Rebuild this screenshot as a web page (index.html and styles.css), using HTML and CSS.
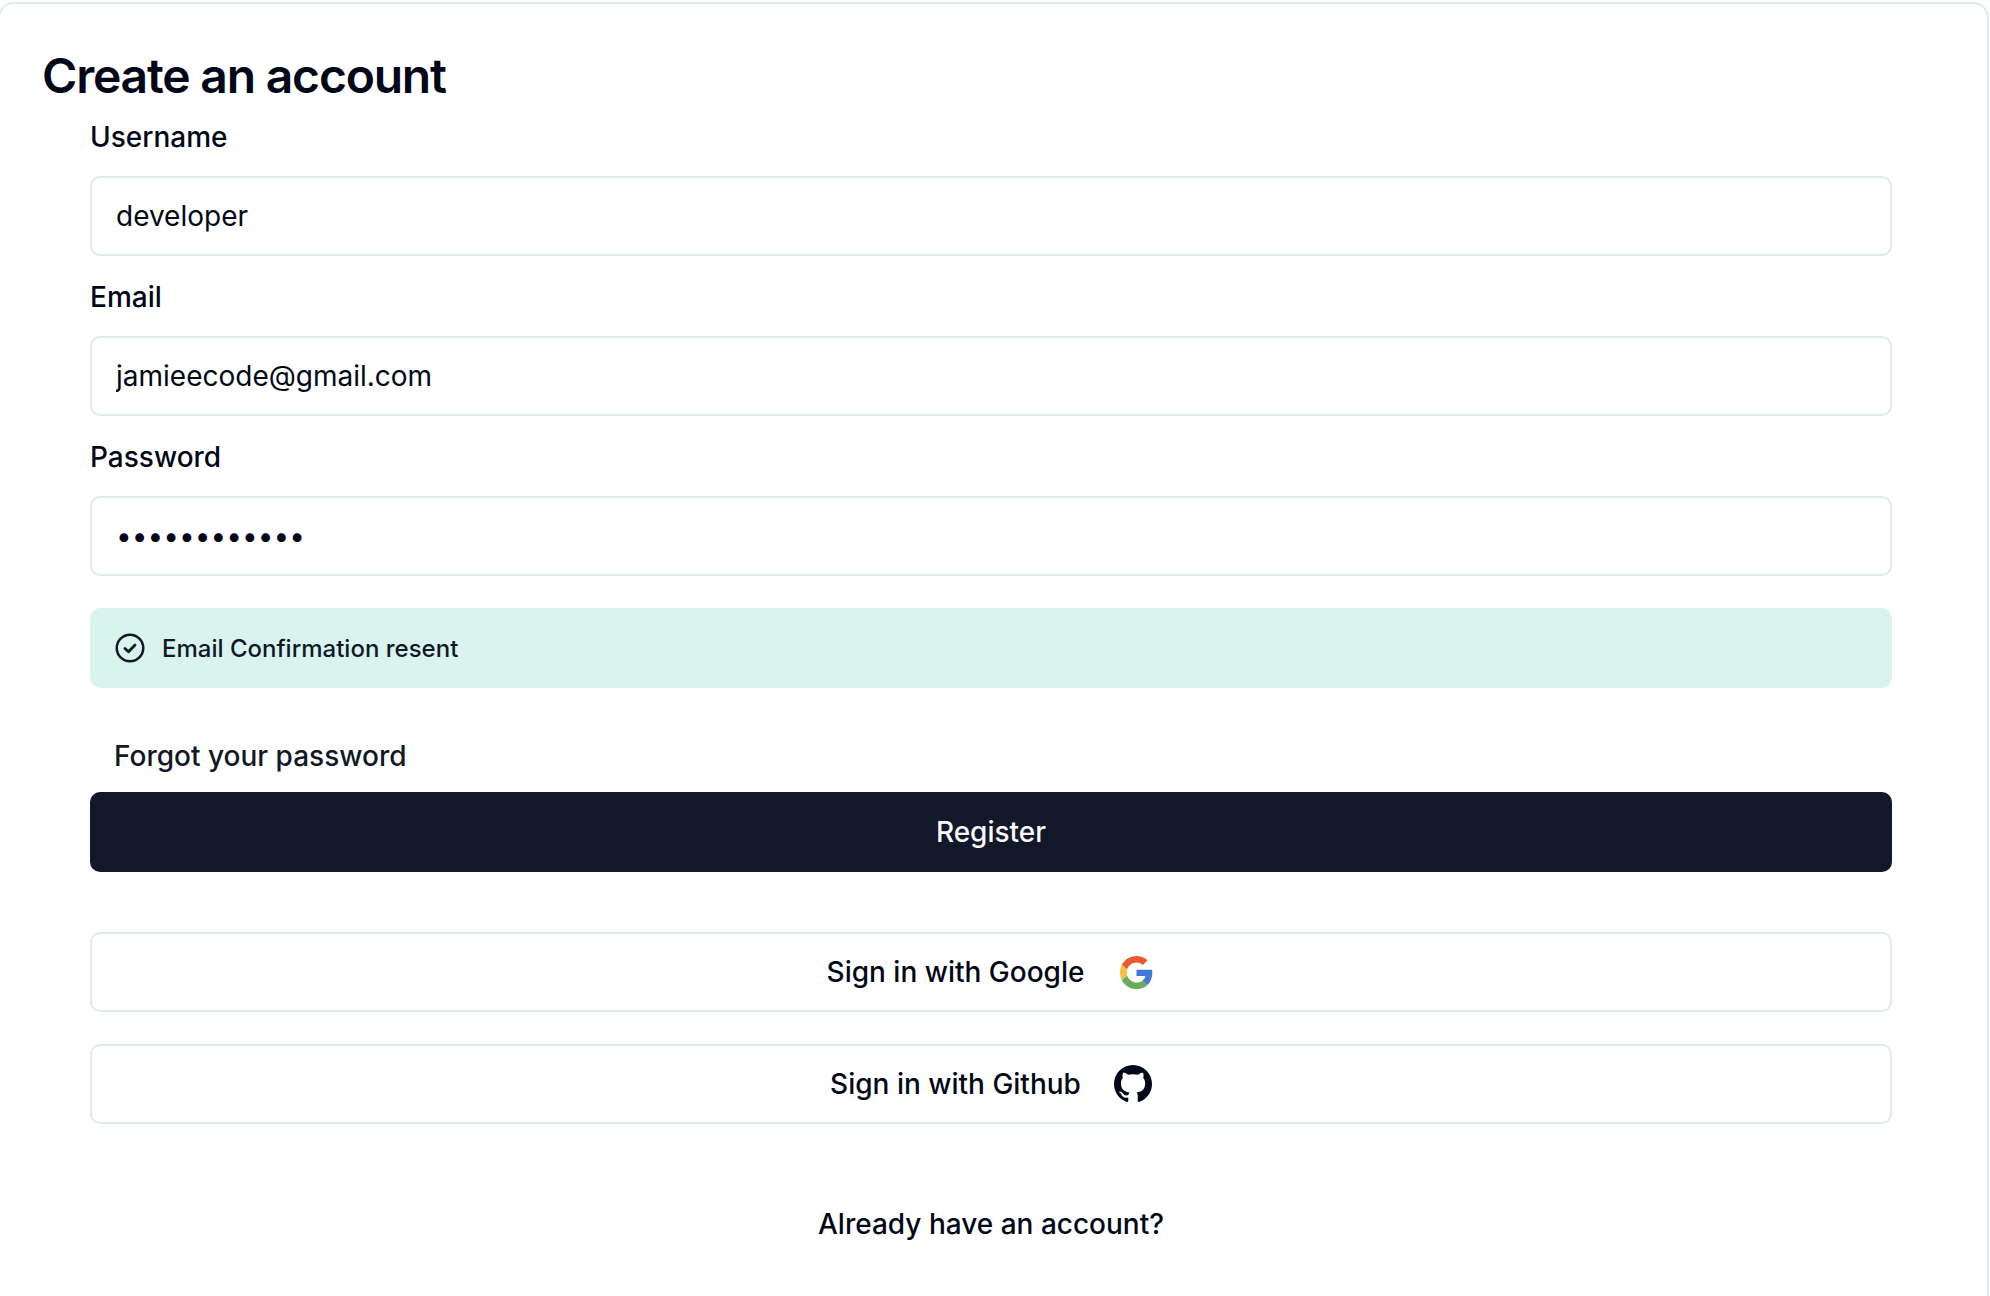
FILE: index.html
```html
<!DOCTYPE html>
<html lang="en">
<head>
<meta charset="utf-8">
<title>Create an account</title>
<link rel="stylesheet" href="styles.css">
</head>
<body>
<main class="card">
  <h1 class="title">Create an account</h1>
  <form class="form">
    <div class="field">
      <label class="label" for="username">Username</label>
      <input class="input" id="username" type="text" value="developer">
    </div>
    <div class="field">
      <label class="label" for="email">Email</label>
      <input class="input" id="email" type="email" value="jamieecode@gmail.com">
    </div>
    <div class="field">
      <label class="label" for="password">Password</label>
      <input class="input" id="password" type="password" value="developer123">
    </div>
    <div class="alert">
      <svg class="alert-icon" viewBox="0 0 24 24" fill="none" stroke="currentColor" stroke-width="2" stroke-linecap="round" stroke-linejoin="round"><circle cx="12" cy="12" r="10.6"/><path d="M8 12.4l2.8 2.6 5.2-5.4" stroke-width="2.3"/></svg>
      <span>Email Confirmation resent</span>
    </div>
    <a class="forgot" href="#">Forgot your password</a>
    <button class="primary" type="button">Register</button>
    <button class="social social-google" type="button">
      <span>Sign in with Google</span>
      <svg class="google-icon" viewBox="0 0 48 48"><path fill="#EC5A2C" d="M24 9.5c3.54 0 6.71 1.22 9.21 3.6l6.85-6.85C35.9 2.38 30.47 0 24 0 14.62 0 6.51 5.38 2.56 13.22l7.98 6.19C12.43 13.72 17.74 9.5 24 9.5z"/><path fill="#3F7BD5" d="M46.98 24.55c0-1.57-.15-3.09-.38-4.55H24v9.02h12.94c-.58 2.96-2.26 5.48-4.78 7.18l7.73 6c4.51-4.18 7.09-10.36 7.09-17.65z"/><path fill="#F6C244" d="M10.53 28.59c-.48-1.45-.76-2.99-.76-4.59s.27-3.14.76-4.59l-7.98-6.19C.92 16.46 0 20.12 0 24c0 3.88.92 7.54 2.56 10.78l7.97-6.19z"/><path fill="#6AAC5C" d="M24 48c6.48 0 11.93-2.13 15.89-5.81l-7.73-6c-2.15 1.45-4.92 2.3-8.16 2.3-6.26 0-11.57-4.22-13.47-9.91l-7.98 6.19C6.51 42.62 14.62 48 24 48z"/></svg>
    </button>
    <button class="social social-github" type="button">
      <span>Sign in with Github</span>
      <svg class="github-icon" viewBox="0 0 16 16" fill="currentColor"><path d="M8 0C3.58 0 0 3.58 0 8c0 3.54 2.29 6.53 5.47 7.59.4.07.55-.17.55-.38 0-.19-.01-.82-.01-1.49-2.01.37-2.53-.49-2.69-.94-.09-.23-.48-.94-.82-1.13-.28-.15-.68-.52-.01-.53.63-.01 1.08.58 1.23.82.72 1.21 1.87.87 2.33.66.07-.52.28-.87.51-1.07-1.78-.2-3.64-.89-3.64-3.95 0-.87.31-1.59.82-2.15-.08-.2-.36-1.02.08-2.12 0 0 .67-.21 2.2.82.64-.18 1.32-.27 2-.27.68 0 1.36.09 2 .27 1.53-1.04 2.2-.82 2.2-.82.44 1.1.16 1.92.08 2.12.51.56.82 1.27.82 2.15 0 3.07-1.87 3.75-3.65 3.95.29.25.54.73.54 1.48 0 1.07-.01 1.93-.01 2.2 0 .21.15.46.55.38A8.013 8.013 0 0016 8c0-4.42-3.58-8-8-8z"/></svg>
    </button>
    <p class="signin"><a href="#">Already have an account?</a></p>
  </form>
</main>
</body>
</html>
```

FILE: styles.css
```css
* { box-sizing: border-box; }
html, body { margin: 0; height: 100%; overflow: hidden; background: #fff; }
body {
  padding: 2px 1px 0 0;
  font-family: Inter, "Liberation Sans", sans-serif;
  color: #020817;
}
.card {
  height: 1400px;
  margin-left: -2px;
  border: 2px solid #e2e8f0;
  border-radius: 16px;
  padding: 42px 95px 0 42px;
  background: #fff;
}
.title {
  margin: 0 0 11px;
  font-size: 48px;
  line-height: 60px;
  font-weight: 600;
  letter-spacing: -1.2px;
}
.form { display: flex; flex-direction: column; padding-left: 48px; }
.field { display: flex; flex-direction: column; margin-bottom: 21px; }
.label { font-size: 28px; line-height: 40px; font-weight: 500; margin-bottom: 19px; }
.input {
  height: 80px;
  width: 100%;
  border: 2px solid #e2e8f0;
  border-radius: 10px;
  padding: 0 24px;
  font: 400 28px Inter, "Liberation Sans", sans-serif;
  color: #020817;
  background: #fff;
  outline: none;
}
.alert {
  display: flex;
  align-items: center;
  gap: 17px;
  height: 80px;
  padding: 0 25px;
  margin-top: 11px;
  border-radius: 10px;
  background: #d9f4ee;
  color: #111827;
  font-size: 24px;
  font-weight: 500;
}
.alert-icon { width: 30px; height: 30px; flex: none; }
.forgot {
  display: block;
  margin: 48px 0 16px 24px;
  font-size: 28px;
  line-height: 40px;
  font-weight: 500;
  color: #111827;
  text-decoration: none;
}
.primary, .social {
  display: flex;
  align-items: center;
  justify-content: center;
  height: 80px;
  width: 100%;
  border-radius: 10px;
  font: 500 28px Inter, "Liberation Sans", sans-serif;
  cursor: pointer;
}
.primary { border: 0; background: #121829; color: #f8fafc; margin-bottom: 60px; }
.social { border: 2px solid #e2e8f0; background: #fff; color: #020817; margin-bottom: 32px; }
.social-google { gap: 36px; padding-right: 8px; }
.social-github { gap: 33px; }
.google-icon { width: 33px; height: 33px; flex: none; }
.github-icon { width: 38px; height: 38px; flex: none; }
.signin { margin: 48px 0 0; text-align: center; font-size: 28px; line-height: 40px; font-weight: 500; }
.signin a { color: #020817; text-decoration: none; }
```
